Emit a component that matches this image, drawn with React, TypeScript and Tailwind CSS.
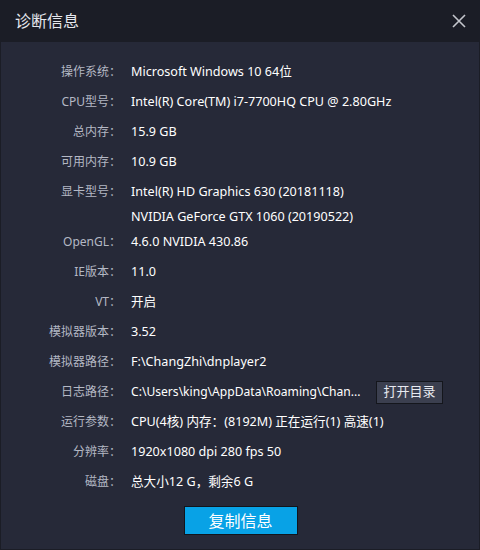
import React from 'react';

interface Row {
  label: string;
  values: string[];
}

const rows: Row[] = [
  { label: '操作系统：', values: ['Microsoft Windows 10 64位'] },
  { label: 'CPU型号：', values: ['Intel(R) Core(TM) i7-7700HQ CPU @ 2.80GHz'] },
  { label: '总内存：', values: ['15.9 GB'] },
  { label: '可用内存：', values: ['10.9 GB'] },
  { label: '显卡型号：', values: ['Intel(R) HD Graphics 630 (20181118)', 'NVIDIA GeForce GTX 1060 (20190522)'] },
  { label: 'OpenGL：', values: ['4.6.0 NVIDIA 430.86'] },
  { label: 'IE版本：', values: ['11.0'] },
  { label: 'VT：', values: ['开启'] },
  { label: '模拟器版本：', values: ['3.52'] },
  { label: '模拟器路径：', values: ['F:\\ChangZhi\\dnplayer2'] },
];

const rowsAfter: Row[] = [
  { label: '运行参数：', values: ['CPU(4核) 内存：(8192M) 正在运行(1) 高速(1)'] },
  { label: '分辨率：', values: ['1920x1080 dpi 280 fps 50'] },
  { label: '磁盘：', values: ['总大小12 G，剩余6 G'] },
];

function InfoRow({ row }: { row: Row }) {
  if (row.values.length > 1) {
    return (
      <div className="flex">
        <div className="w-[120px] h-[30px] flex items-center justify-end text-[12px] text-[#b4b8c4]">{row.label}</div>
        <div className="flex flex-col pl-[10px] text-[12.6px] text-white">
          <div className="h-[30px] flex items-center">{row.values[0]}</div>
          <div className="h-[20px] flex items-center">{row.values[1]}</div>
        </div>
      </div>
    );
  }
  return (
    <div className="flex h-[30px] items-center">
      <div className="w-[120px] text-right text-[12px] text-[#b4b8c4]">{row.label}</div>
      <div className="pl-[10px] text-[12.6px] text-white">{row.values[0]}</div>
    </div>
  );
}

export default function App() {
  return (
    <div
      className="w-[480px] h-[550px] flex flex-col bg-[#1b1d26]"
      style={{ fontFamily: '"Noto Sans", "Noto Sans CJK SC", sans-serif' }}
    >
      {/* Title bar */}
      <div className="h-[42px] flex items-center justify-between pl-[15px] pr-[14px]">
        <span className="text-[16px] text-[#e6e8ee]">诊断信息</span>
        <svg width="14" height="14" viewBox="0 0 14 14" className="text-[#c4c6cc]">
          <path d="M1 1L13 13M13 1L1 13" stroke="currentColor" strokeWidth="1.6" />
        </svg>
      </div>

      {/* Body */}
      <div className="flex-1 bg-[#262938] border-x border-b border-[#1b1d26] pt-[15px] flex flex-col">
        {rows.map((row) => (
          <InfoRow key={row.label} row={row} />
        ))}

        <div className="flex h-[30px] items-center">
          <div className="w-[120px] shrink-0 text-right text-[12px] text-[#b4b8c4]">日志路径：</div>
          <div className="pl-[10px] w-[245px] shrink-0 text-[12.1px] text-white whitespace-nowrap">
            C:\Users\king\AppData\Roaming\Chan...
          </div>
          <button className="ml-[10px] h-[23px] w-[67px] shrink-0 bg-[#3b3f4f] border border-[#14161c] text-[13px] text-[#e8eaf0] flex items-center justify-center">
            打开目录
          </button>
        </div>

        {rowsAfter.map((row) => (
          <InfoRow key={row.label} row={row} />
        ))}

        <div className="flex justify-center pt-[9px] pl-[1px]">
          <button className="w-[114px] h-[29px] bg-[#08a2e6] border border-[#12151c] text-[16px] text-white flex items-center justify-center">
            复制信息
          </button>
        </div>
      </div>
    </div>
  );
}
